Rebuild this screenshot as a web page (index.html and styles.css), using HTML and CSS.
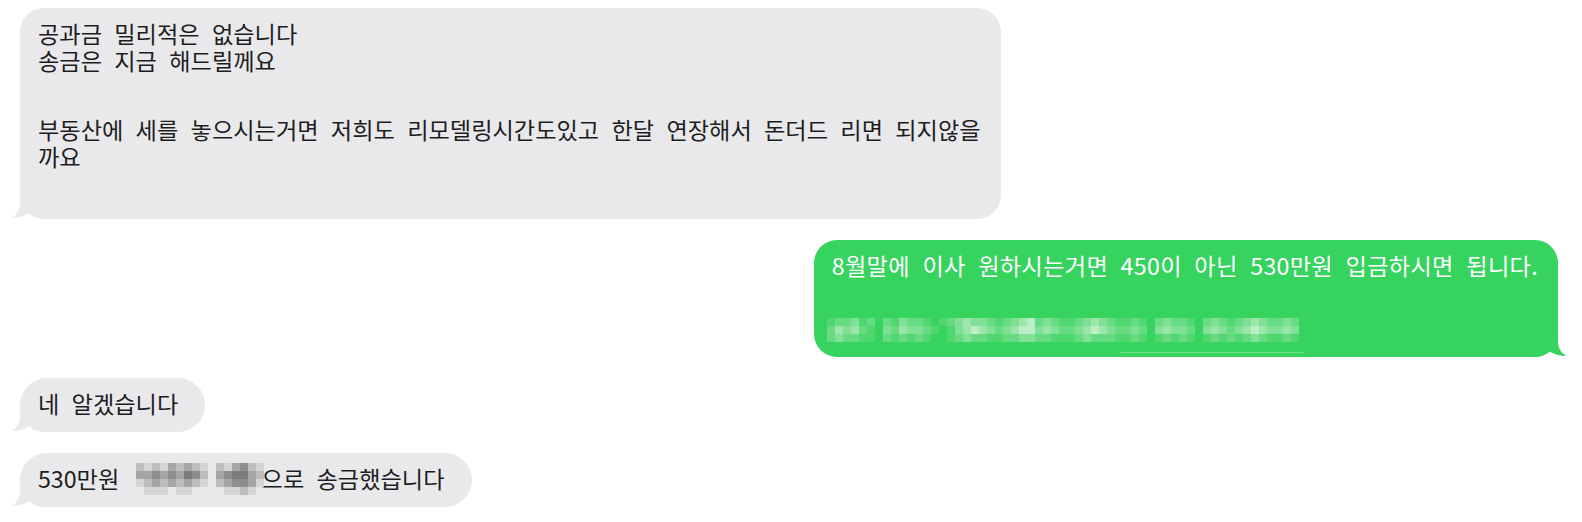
FILE: index.html
```html
<!DOCTYPE html>
<html lang="ko">
<head>
    <meta charset="utf-8">
    <title>메시지</title>
    <link rel="stylesheet" href="styles.css">
</head>
<body>
    <div class="thread">
        <div class="msg them long">
            <p>공과금 밀리적은 없습니다<br>송금은 지금 해드릴께요</p>
            <p class="para">부동산에 세를 놓으시는거면 저희도 리모델링시간도있고 한달 연장해서 돈더드 리면 되지않을<br>까요</p>
            <svg class="tail" viewBox="0 0 40 30"><path d="M10 0 L10 14 C10 21 7 26 1.5 28.8 C7 29.5 14 27.5 19.5 23.8 C22.5 28 27 30 34 30 L40 30 L40 0 Z"/></svg>
        </div>
        <div class="msg me">
            <p>8월말에 이사 원하시는거면 450이 아닌 530만원 입금하시면 됩니다.</p>
            <div class="redact green" data-rows="122312021322101234332123452321123432112102322102321234322320|243421032433210134543234553432234543223203433203432345433430|232211021212100123221122332211123222112101212101212123211210"></div>
            <div class="smudge"></div>
            <svg class="tail" viewBox="0 0 40 30"><path d="M10 0 L10 14 C10 21 7 26 1.5 28.8 C7 29.5 14 27.5 19.5 23.8 C22.5 28 27 30 34 30 L40 30 L40 0 Z"/></svg>
        </div>
        <div class="msg them pill">
            <p>네 알겠습니다</p>
            <svg class="tail" viewBox="0 0 40 30"><path d="M10 0 L10 14 C10 21 7 26 1.5 28.8 C7 29.5 14 27.5 19.5 23.8 C22.5 28 27 30 34 30 L40 30 L40 0 Z"/></svg>
        </div>
        <div class="msg them pill">
            <p>530만원 <span class="redact gray" data-rows="2121323210213421|3343435420345532|1232323210234431|0111011000011210"></span>으로 송금했습니다</p>
            <svg class="tail" viewBox="0 0 40 30"><path d="M10 0 L10 14 C10 21 7 26 1.5 28.8 C7 29.5 14 27.5 19.5 23.8 C22.5 28 27 30 34 30 L40 30 L40 0 Z"/></svg>
        </div>
    </div>
    <script src="pixel.js"></script>
</body>
</html>
```

FILE: styles.css
```css
body {
    margin: 0;
    background-color: #fff;
    font-family: "Noto Sans CJK KR", "Noto Sans", sans-serif;
}
.thread {
    display: flex;
    flex-direction: column;
    gap: 21px;
    padding: 8px 24px 0 20px;
}
.msg {
    position: relative;
    padding: 12px 20px 15px 18px;
    font-size: 23.2px;
    line-height: 27px;
    word-spacing: 5.8px;
    white-space: nowrap;
}
.msg p {
    margin: 0;
}
.them {
    align-self: flex-start;
    background: #e9e9eb;
    color: #1d1d1f;
    border-radius: 24px;
}
.me {
    align-self: flex-end;
    background: #37d35f;
    color: #fff;
    border-radius: 23px;
    padding-bottom: 4px;
    letter-spacing: 0.3px;
}
.long {
    padding-bottom: 49px;
}
.para {
    margin-top: 42px !important;
}
.pill {
    border-radius: 27px;
    padding-right: 27px;
}

/* bubble tails */
.tail {
    position: absolute;
    bottom: 0;
    width: 40px;
    height: 30px;
    fill: currentColor;
}
.them .tail {
    left: -10px;
    color: #e9e9eb;
}
.me .tail {
    right: -10px;
    color: #37d35f;
    transform: scaleX(-1);
}
.msg p, .redact, .smudge {
    position: relative;
    z-index: 1;
}

/* pixelated parts */
.redact {
    display: flex;
    flex-direction: column;
}
.px-row {
    display: flex;
}
.px {
    width: 8px;
    height: 8px;
    flex: none;
}
.green {
    margin: 39px 0 0 -5px;
}
.green .s1 { background: #4fd66f; }
.green .s2 { background: #66db82; }
.green .s3 { background: #7fe096; }
.green .s4 { background: #9ae6ab; }
.green .s5 { background: #bdeec7; }
.gray {
    display: inline-flex;
    vertical-align: top;
    margin: -2px -2px -3px 4px;
}
.gray .s1 { background: #d4d4d6; }
.gray .s2 { background: #bdbdbf; }
.gray .s3 { background: #a6a6a8; }
.gray .s4 { background: #8e8e90; }
.gray .s5 { background: #7b7b7d; }
.smudge {
    width: 185px;
    height: 1px;
    margin: 10px 0 0 288px;
    background: rgba(255, 255, 255, 0.25);
}
```

FILE: pixel.js
```js
// build the blurred blocks from the digit rows
document.querySelectorAll('.redact').forEach(function (box) {
    box.dataset.rows.split('|').forEach(function (row) {
        var line = document.createElement('span');
        line.className = 'px-row';
        for (var i = 0; i < row.length; i++) {
            var cell = document.createElement('span');
            cell.className = 'px s' + row[i];
            line.appendChild(cell);
        }
        box.appendChild(line);
    });
});
```
